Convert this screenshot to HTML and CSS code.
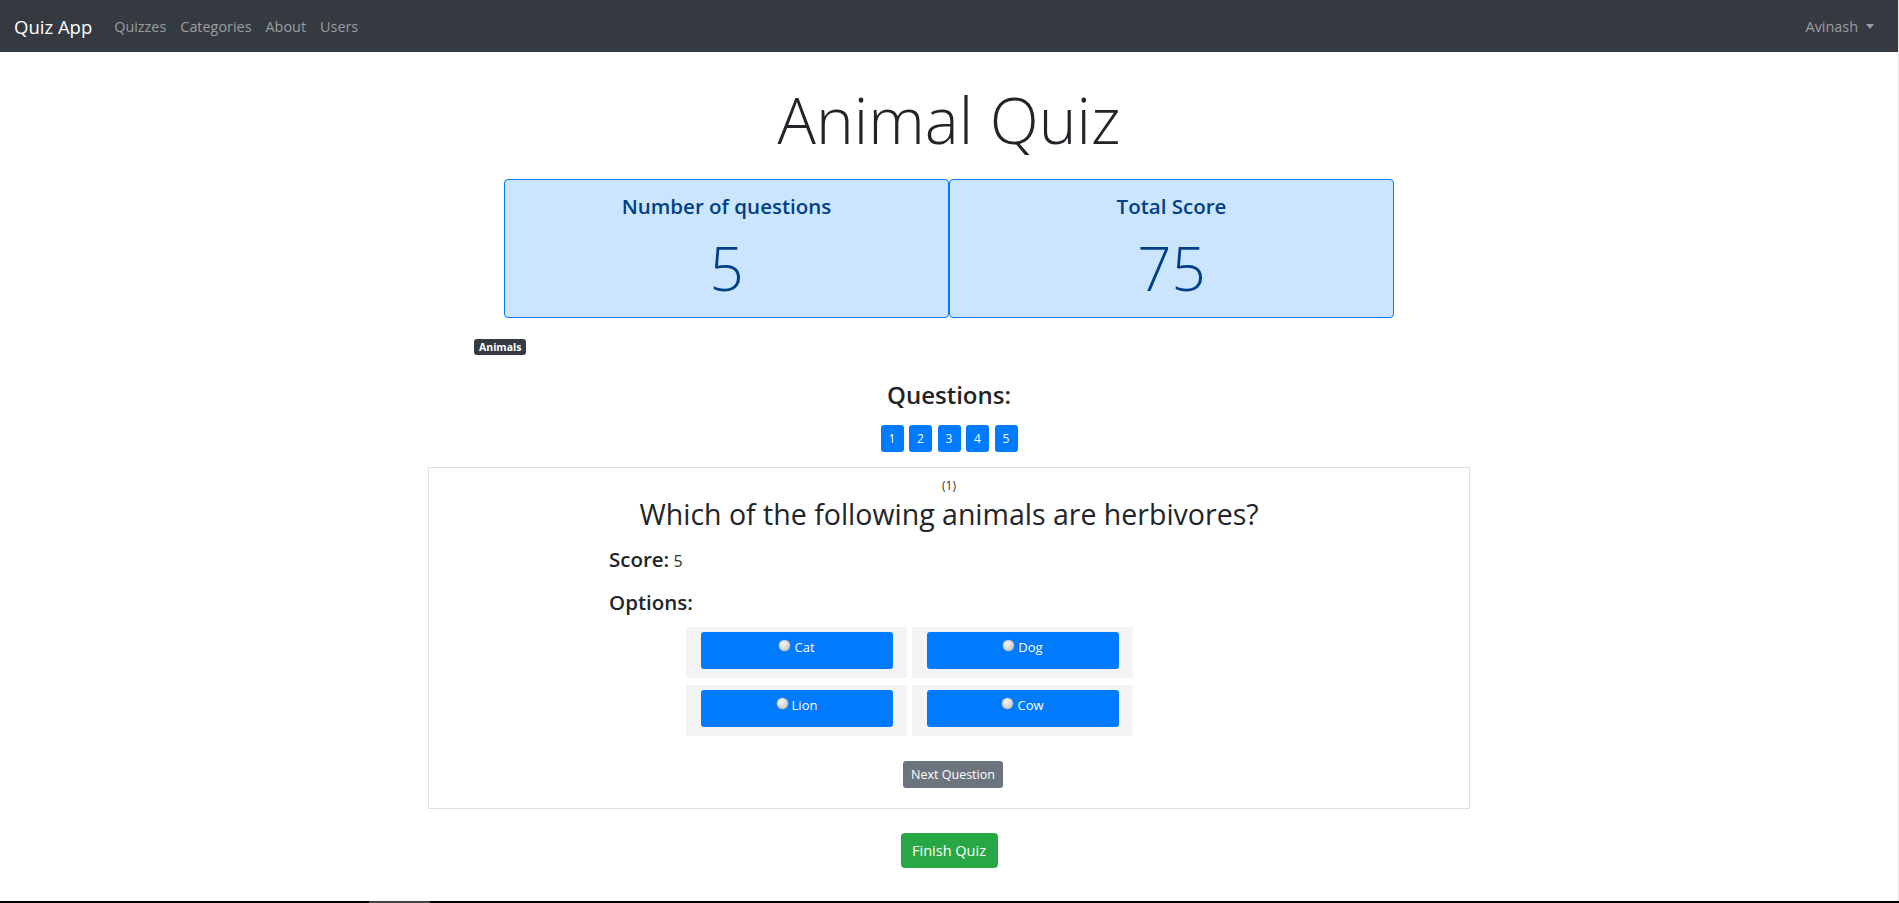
FILE: index.html
```html
<!DOCTYPE html>
<html lang="en">
<head>
<meta charset="utf-8">
<title>Animal Quiz</title>
<link rel="stylesheet" href="styles.css">
</head>
<body>
<div class="page">
  <nav class="navbar">
    <div class="nav-left">
      <a class="brand" href="#">Quiz App</a>
      <a class="nav-link" href="#">Quizzes</a>
      <a class="nav-link" href="#">Categories</a>
      <a class="nav-link" href="#">About</a>
      <a class="nav-link" href="#">Users</a>
    </div>
    <a class="nav-link user" href="#">Avinash <span class="caret"></span></a>
  </nav>

  <main class="container">
    <h1 class="title">Animal Quiz</h1>

    <div class="stats">
      <div class="stat">
        <div class="stat-label">Number of questions</div>
        <div class="stat-value">5</div>
      </div>
      <div class="stat">
        <div class="stat-label">Total Score</div>
        <div class="stat-value">75</div>
      </div>
    </div>

    <div class="badge-row"><span class="badge">Animals</span></div>

    <h4 class="questions-heading">Questions:</h4>
    <div class="qnums">
      <button class="qnum">1</button>
      <button class="qnum">2</button>
      <button class="qnum">3</button>
      <button class="qnum">4</button>
      <button class="qnum">5</button>
    </div>

    <section class="qcard">
      <div class="qindex">(1)</div>
      <h3 class="qtext">Which of the following animals are herbivores?</h3>
      <div class="qbody">
        <div class="score"><span class="label">Score:</span> <span class="score-val">5</span></div>
        <div class="label options-label">Options:</div>
        <div class="options">
          <div class="cell"><label class="opt"><span class="radio"></span>Cat</label></div>
          <div class="cell"><label class="opt"><span class="radio"></span>Dog</label></div>
          <div class="cell"><label class="opt"><span class="radio"></span>Lion</label></div>
          <div class="cell"><label class="opt"><span class="radio"></span>Cow</label></div>
        </div>
      </div>
      <div class="next-row"><button class="btn-next">Next Question</button></div>
    </section>

    <div class="finish-row"><button class="btn-finish">Finish Quiz</button></div>
  </main>
  <div class="taskbar"><span class="taskbar-item"></span></div>
</div>
</body>
</html>
```

FILE: styles.css
```css
* { box-sizing: border-box; }
html, body { margin: 0; padding: 0; }
body {
  font-family: "Open Sans", "Noto Sans", sans-serif;
  color: #212529;
  background: #fff;
}
.page {
  width: 1899px;
  min-height: 903px;
  border-right: 1px solid #e6e6e6;
}
.navbar {
  height: 52px;
  background: #343a40;
  display: flex;
  align-items: center;
  justify-content: space-between;
  padding: 0 24px 0 14px;
  width: 1898px;
}
.nav-left { display: flex; align-items: center; }
.brand {
  color: #fff;
  font-size: 18.5px;
  text-decoration: none;
  margin-right: 15px;
}
.nav-link {
  color: rgba(255,255,255,0.5);
  font-size: 14.4px;
  text-decoration: none;
  padding: 0 7px;
}
.user { display: flex; align-items: center; padding: 0; }
.caret {
  display: inline-block;
  width: 0; height: 0;
  margin-left: 8px;
  border-top: 5px solid rgba(255,255,255,0.5);
  border-left: 4.5px solid transparent;
  border-right: 4.5px solid transparent;
}
.container {
  width: 1042px;
  margin: 0 auto;
  display: flex;
  flex-direction: column;
}
.title {
  margin: 18px 0 0;
  text-align: center;
  font-weight: 300;
  font-size: 64px;
  line-height: 100px;
  color: #212529;
}
.stats {
  display: flex;
  justify-content: center;
  margin-top: 9px;
}
.stat {
  width: 445px;
  height: 139px;
  background: #cce5ff;
  border: 1px solid #007bff;
  border-radius: 4px;
  color: #004085;
  text-align: center;
  padding-top: 12px;
}
.stat-label {
  font-size: 20.5px;
  font-weight: 600;
  line-height: 28px;
}
.stat-value {
  font-size: 60px;
  font-weight: 300;
  line-height: 80px;
  margin-top: 8px;
}
.badge-row { margin-top: 16px; padding-left: 46px; }
.badge {
  display: inline-block;
  background: #343a40;
  color: #fff;
  font-size: 10.5px;
  font-weight: 700;
  line-height: 16px;
  padding: 0 5px;
  border-radius: 3px;
}
.questions-heading {
  margin: 23px 0 0;
  text-align: center;
  font-size: 24px;
  font-weight: 600;
  line-height: 32px;
}
.qnums {
  display: flex;
  justify-content: center;
  gap: 5.5px;
  margin-top: 14px;
}
.qnum {
  width: 23px;
  height: 27px;
  border: none;
  border-radius: 3px;
  background: #007bff;
  color: #fff;
  font-family: inherit;
  font-size: 12px;
  padding: 0;
}
.qcard {
  margin-top: 15px;
  border: 1px solid #dfdfdf;
  height: 342px;
  padding-top: 9px;
}
.qindex {
  text-align: center;
  font-size: 12px;
  line-height: 18px;
  color: #333;
}
.qtext {
  margin: 1px 0 0;
  text-align: center;
  font-size: 28.5px;
  font-weight: 400;
  line-height: 36px;
  color: #212529;
}
.qbody { padding-left: 180px; }
.score { margin-top: 13px; line-height: 28px; }
.label { font-size: 20.5px; font-weight: 600; }
.score-val { font-size: 16px; color: #333; }
.options-label { margin-top: 13px; line-height: 28px; }
.options {
  display: grid;
  grid-template-columns: 221px 221px;
  column-gap: 5px;
  row-gap: 7px;
  margin: 11px 0 0 77px;
}
.cell {
  background: #f4f4f4;
  height: 51px;
  padding: 5px 14px 0 15px;
}
.opt {
  display: flex;
  justify-content: center;
  align-items: flex-start;
  height: 37px;
  background: #007bff;
  border-radius: 3px;
  color: #fff;
  font-size: 13px;
  line-height: 16px;
  padding-top: 7px;
}
.radio {
  width: 11px;
  height: 11px;
  border-radius: 50%;
  margin: 1px 4px 0 0;
  background: radial-gradient(circle at 40% 35%, #f6f6f6 0%, #d4d4d4 55%, #aeaeae 100%);
  box-shadow: 0 0 0 0.5px #8f8f8f;
}
.next-row {
  display: flex;
  justify-content: center;
  margin-top: 25px;
  padding-left: 8px;
}
.btn-next {
  width: 100px;
  height: 27px;
  border: none;
  border-radius: 3px;
  background: #6c757d;
  color: #fff;
  font-family: inherit;
  font-size: 12.5px;
  padding: 0;
}
.finish-row {
  display: flex;
  justify-content: center;
  margin-top: 24px;
}
.btn-finish {
  width: 97px;
  height: 35px;
  border: none;
  border-radius: 4px;
  background: #28a745;
  color: #fff;
  font-family: inherit;
  font-size: 14.5px;
  padding: 0;
}
.taskbar {
  position: fixed;
  left: 0;
  bottom: 0;
  width: 1899px;
  height: 2px;
  background: #000;
}
.taskbar-item {
  display: block;
  margin-left: 369px;
  width: 61px;
  height: 2px;
  background: #444;
}
```
